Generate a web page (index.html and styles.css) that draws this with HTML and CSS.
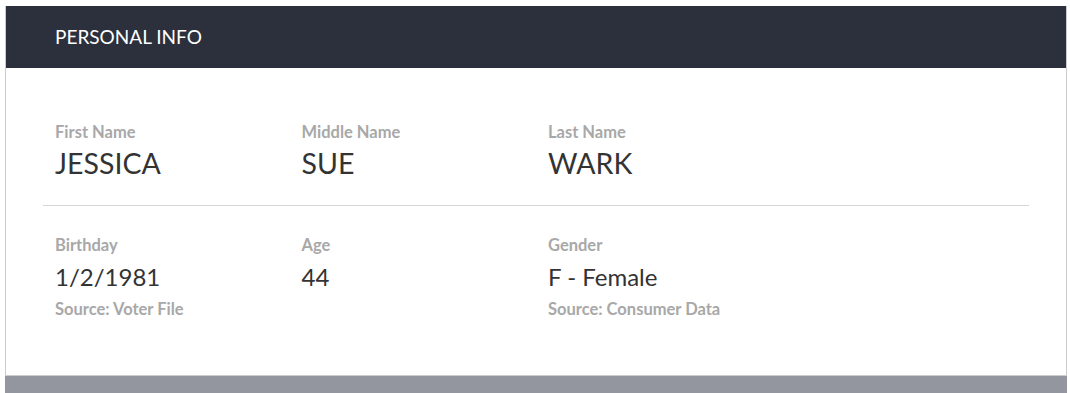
FILE: index.html
```html
<!DOCTYPE html>
<html lang="en">
<head>
  <meta charset="UTF-8">
  <title>Personal Info</title>
  <link rel="stylesheet" href="styles.css">
</head>
<body>

<div class="panel">
  <div class="panel-header">PERSONAL INFO</div>
  <div class="panel-body">
    <div class="info-row">
      <div class="info-cell">
        <div class="info-label">First Name</div>
        <div class="info-value big">JESSICA</div>
      </div>
      <div class="info-cell">
        <div class="info-label">Middle Name</div>
        <div class="info-value big">SUE</div>
      </div>
      <div class="info-cell">
        <div class="info-label">Last Name</div>
        <div class="info-value big">WARK</div>
      </div>
      <div class="info-cell"></div>
    </div>
    <div class="info-row">
      <div class="info-cell">
        <div class="info-label">Birthday</div>
        <div class="info-value">1/2/1981</div>
        <div class="info-source">Source: Voter File</div>
      </div>
      <div class="info-cell">
        <div class="info-label">Age</div>
        <div class="info-value">44</div>
      </div>
      <div class="info-cell">
        <div class="info-label">Gender</div>
        <div class="info-value">F - Female</div>
        <div class="info-source">Source: Consumer Data</div>
      </div>
      <div class="info-cell"></div>
    </div>
  </div>
</div>

<div class="panel-next"></div>

</body>
</html>
```

FILE: styles.css
```css
body {
  margin: 0;
  padding: 6px 3px 0 5px;
  font-family: Lato, "Liberation Sans", sans-serif;
  background: #fff;
}

.panel {
  border: 1px solid #ccc;
  border-top: none;
  background: #fff;
}

.panel-header {
  background: #2b303c;
  color: #fff;
  height: 62px;
  line-height: 62px;
  padding-left: 49px;
  font-size: 19px;
}

.panel-body {
  padding: 54px 37px 56px 37px;
}

.info-row {
  display: grid;
  grid-template-columns: repeat(4, 1fr);
}

.info-row + .info-row {
  border-top: 1px solid #d6d6d6;
  margin-top: 24px;
  padding-top: 29px;
}

.info-cell {
  padding: 0 12px;
}

.info-label {
  font-size: 16.5px;
  font-weight: bold;
  color: #a8a8a8;
  line-height: 20px;
}

.info-value {
  font-size: 24px;
  color: #333;
  line-height: 34px;
  margin-top: 5px;
}

.info-value.big {
  font-size: 28.5px;
  line-height: 36px;
  margin-top: 3px;
}

.info-source {
  font-size: 16.5px;
  font-weight: bold;
  color: #a8a8a8;
  line-height: 20px;
  margin-top: 5px;
}

.panel-next {
  background: #93969e;
  height: 30px;
}
```
